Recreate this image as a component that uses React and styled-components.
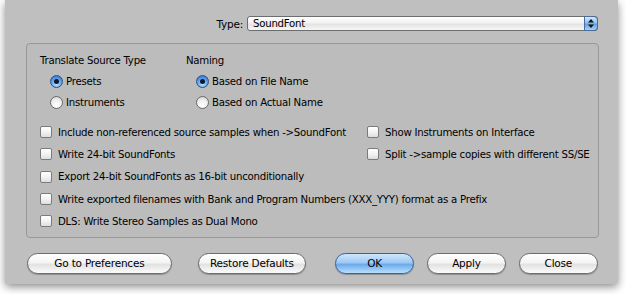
import React from "react";
import styled, { createGlobalStyle } from "styled-components";

const GlobalStyle = createGlobalStyle`
  body {
    margin: 0;
    background: #ffffff;
    font-family: "Lucida Grande", "DejaVu Sans", sans-serif;
    font-size: 10.2px;
    letter-spacing: -0.25px;
    color: #000;
  }
`;

const Page = styled.div`
  width: 626px;
  height: 294px;
  overflow: hidden;
  padding-left: 5px;
  box-sizing: border-box;
`;

const Window = styled.div`
  width: 613px;
  height: 284px;
  background: #bfbfbf;
  border-radius: 0 0 3px 3px;
  box-shadow: 0 3px 8px rgba(0, 0, 0, 0.45);
  display: flex;
  flex-direction: column;
  box-sizing: border-box;
  padding: 16px 20px 0 21px;
`;

const TypeRow = styled.div`
  display: flex;
  justify-content: flex-end;
  align-items: center;
  gap: 4px;
  height: 15px;
`;

const Label = styled.span`
  font-size: 10.5px;
`;

const Popup = styled.div`
  position: relative;
  width: 344px;
  height: 13px;
  border: 1px solid #6d6d6d;
  border-radius: 3px;
  background: linear-gradient(#ffffff, #f2f2f2 45%, #e3e3e3 55%, #f6f6f6);
  display: flex;
  align-items: center;
  padding-left: 5px;
  box-sizing: content-box;
`;

const PopupArrows = styled.div`
  position: absolute;
  right: -1px;
  top: -1px;
  width: 14px;
  height: 15px;
  border: 1px solid #4b6b9c;
  border-radius: 0 4px 4px 0;
  background: linear-gradient(#d7e9fb, #8fc0f0 45%, #5fa0e6 55%, #a8d2f8);
  display: flex;
  align-items: center;
  justify-content: center;
  box-sizing: border-box;
`;

const Panel = styled.div`
  margin-top: 12px;
  width: 573px;
  height: 195px;
  border: 1px solid #989898;
  border-radius: 4px;
  background: #bcbcbc;
  box-sizing: border-box;
  padding: 11px 12px 0 13px;
`;

const Groups = styled.div`
  display: flex;
`;

const Group = styled.div`
  width: ${(p) => p.width}px;
  display: flex;
  flex-direction: column;
`;

const GroupTitle = styled.div`
  height: 15px;
  margin-bottom: 1px;
`;

const RadioRow = styled.div`
  display: flex;
  align-items: center;
  gap: 3px;
  height: 21px;
  padding-left: 10px;
`;

const Radio = styled.span`
  width: 13px;
  height: 13px;
  border-radius: 50%;
  box-sizing: border-box;
  display: inline-flex;
  align-items: center;
  justify-content: center;
  border: 1px solid ${(p) => (p.on ? "#2f4f86" : "#6a6a6a")};
  background: ${(p) =>
    p.on
      ? "radial-gradient(circle at 50% 75%, #bfe3ff, #6aa9ec 45%, #3d7fd6 80%)"
      : "radial-gradient(circle at 50% 75%, #ffffff, #f0f0f0 50%, #d4d4d4 90%)"};
  &::after {
    content: "";
    width: 5px;
    height: 5px;
    border-radius: 50%;
    background: #0b1a33;
    display: ${(p) => (p.on ? "block" : "none")};
  }
`;

const Options = styled.div`
  display: grid;
  grid-template-columns: 327px 1fr;
  grid-auto-rows: 22.3px;
  margin-top: 8px;
`;

const CheckRow = styled.div`
  display: flex;
  align-items: center;
  gap: 6px;
  grid-column: ${(p) => (p.wide ? "1 / span 2" : "auto")};
  white-space: nowrap;
`;

const Check = styled.span`
  width: 12px;
  height: 12px;
  flex: none;
  box-sizing: border-box;
  border: 1px solid #7b7b7b;
  border-radius: 2px;
  background: linear-gradient(#ffffff, #f3f3f3 50%, #dedede);
  box-shadow: inset 0 1px 0 #fff;
`;

const ButtonBar = styled.div`
  display: flex;
  align-items: center;
  margin-top: 15px;
  padding-left: 1px;
`;

const Button = styled.button`
  font-family: inherit;
  font-size: 10.5px;
  letter-spacing: -0.2px;
  color: #000;
  height: 21px;
  width: ${(p) => p.width}px;
  margin-left: ${(p) => p.gap || 0}px;
  border-radius: 11px;
  border: 1px solid ${(p) => (p.primary ? "#3e5f95" : "#6c6c6c")};
  background: ${(p) =>
    p.primary
      ? "linear-gradient(#cfe6fc, #9ccaf5 45%, #6eaaea 55%, #b7e0ff)"
      : "linear-gradient(#ffffff, #f4f4f4 45%, #e2e2e2 55%, #fbfbfb)"};
  box-shadow: 0 1px 1px rgba(0, 0, 0, 0.25);
  padding: 0;
  padding-bottom: 1px;
`;

const checks = [
  ["Include non-referenced source samples when ->SoundFont", "Show Instruments on Interface"],
  ["Write 24-bit SoundFonts", "Split ->sample copies with different SS/SE"],
  ["Export 24-bit SoundFonts as 16-bit unconditionally"],
  ["Write exported filenames with Bank and Program Numbers (XXX_YYY) format as a Prefix"],
  ["DLS: Write Stereo Samples as Dual Mono"],
];

function Arrows() {
  return (
    <svg width="6" height="9" viewBox="0 0 6 9">
      <path d="M3 0 L6 3.5 L0 3.5 Z" fill="#111" />
      <path d="M3 9 L6 5.5 L0 5.5 Z" fill="#111" />
    </svg>
  );
}

export default function App() {
  return (
    <>
      <GlobalStyle />
      <Page>
        <Window>
          <TypeRow>
            <Label>Type:</Label>
            <Popup>
              SoundFont
              <PopupArrows>
                <Arrows />
              </PopupArrows>
            </Popup>
          </TypeRow>

          <Panel>
            <Groups>
              <Group width={146}>
                <GroupTitle>Translate Source Type</GroupTitle>
                <RadioRow>
                  <Radio on /> Presets
                </RadioRow>
                <RadioRow>
                  <Radio /> Instruments
                </RadioRow>
              </Group>
              <Group width={200}>
                <GroupTitle>Naming</GroupTitle>
                <RadioRow>
                  <Radio on /> Based on File Name
                </RadioRow>
                <RadioRow>
                  <Radio /> Based on Actual Name
                </RadioRow>
              </Group>
            </Groups>

            <Options>
              {checks.map((row, i) =>
                row.length === 1 ? (
                  <CheckRow key={i} wide>
                    <Check /> {row[0]}
                  </CheckRow>
                ) : (
                  row.map((t) => (
                    <CheckRow key={t}>
                      <Check /> {t}
                    </CheckRow>
                  ))
                )
              )}
            </Options>
          </Panel>

          <ButtonBar>
            <Button width={146}>Go to Preferences</Button>
            <Button width={109} gap={26}>Restore Defaults</Button>
            <Button width={80} gap={29} primary>OK</Button>
            <Button width={79} gap={13}>Apply</Button>
            <Button width={80} gap={13}>Close</Button>
          </ButtonBar>
        </Window>
      </Page>
    </>
  );
}
